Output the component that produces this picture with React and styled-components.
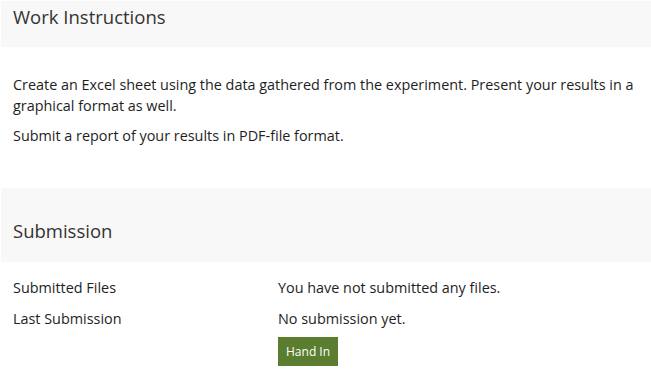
import React from 'react';
import styled, { createGlobalStyle } from 'styled-components';

const GlobalStyle = createGlobalStyle`
  body {
    margin: 0;
    background: #fff;
    font-family: "Open Sans", "Noto Sans", sans-serif;
    color: #222;
  }
`;

const Page = styled.div`
  padding: 1px 0 0 1px;
`;

const SectionHeader = styled.div`
  background-color: #f8f8f8;
  height: ${(p) => p.height}px;
  padding: ${(p) => p.top}px 12px 0 12px;
  box-sizing: border-box;
  font-size: 18.5px;
  line-height: 26px;
  color: #333;
`;

const Body = styled.div`
  padding: 27px 12px 0 12px;
  font-size: 14.4px;
  line-height: 21px;
  color: #1e1e1e;
`;

const Para = styled.p`
  margin: 0 0 9px 0;
`;

const Spacer = styled.div`
  height: 33px;
`;

const Table = styled.div`
  display: grid;
  grid-template-columns: 265px 1fr;
  row-gap: 10px;
  padding: 15px 12px 0 12px;
  font-size: 14.4px;
  line-height: 21px;
  color: #1e1e1e;
`;

const Button = styled.button`
  justify-self: start;
  background-color: #5a7d2f;
  color: #fff;
  border: none;
  font-family: "Open Sans", sans-serif;
  font-size: 12px;
  height: 29px;
  padding: 0 8px;
  margin-top: -2px;
  cursor: pointer;
`;

export default function App() {
  return (
    <Page>
      <GlobalStyle />
      <SectionHeader height={46} top={3}>Work Instructions</SectionHeader>
      <Body>
        <Para>
          Create an Excel sheet using the data gathered from the experiment. Present your results in a
          graphical format as well.
        </Para>
        <Para>Submit a report of your results in PDF-file format.</Para>
      </Body>
      <Spacer />
      <SectionHeader height={74} top={30}>Submission</SectionHeader>
      <Table>
        <span>Submitted Files</span>
        <span>You have not submitted any files.</span>
        <span>Last Submission</span>
        <span>No submission yet.</span>
        <span />
        <Button>Hand In</Button>
      </Table>
    </Page>
  );
}
